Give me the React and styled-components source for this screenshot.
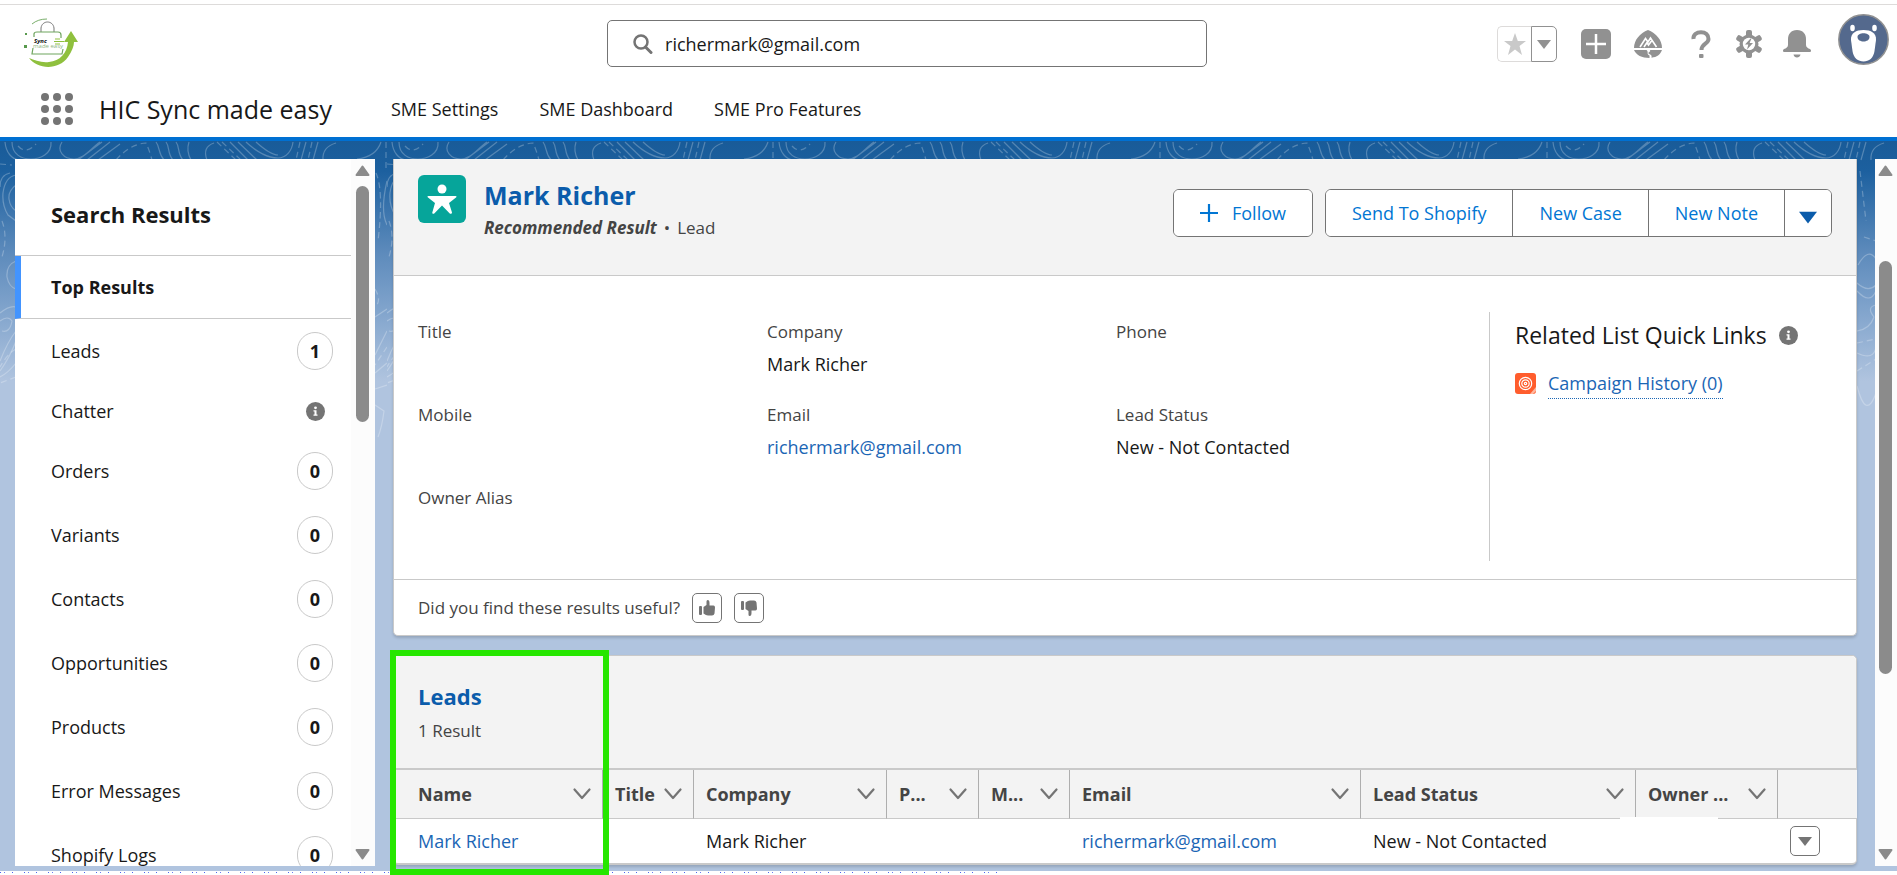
import React from 'react'
import styled, { createGlobalStyle } from 'styled-components';

const GlobalStyle = createGlobalStyle`
* {
  box-sizing: border-box;
}
body {
  margin: 0;
  background: #fff;
  color: #181818;
  font-family: "Open Sans", "Noto Sans", sans-serif;
  font-size: 18px;
  line-height: 26px;
}
button, input {
  font: inherit;
  color: inherit;
}
a {
  color: #1b66b5;
  text-decoration: none;
}
svg {
  display: block;
}
`;

const Page = styled.div`
display: flex;
flex-direction: column;
height: 100vh;
padding-top: 4px;
overflow: hidden;
`;

/* ---------- header ---------- */

const TopBar = styled.header`
display: grid;
grid-template-columns: 32% minmax(0, 600px) 1fr;
align-items: center;
height: 78px;
border-top: 1px solid #dddbda;
`;

const LogoLink = styled.a`
padding-left: 22px;
`;

const SearchBox = styled.label`
display: flex;
align-items: center;
gap: 12px;
height: 47px;
padding: 0 25px;
border: 1px solid #747474;
border-radius: 5px;
`;

const SearchInput = styled.input`
flex: 1;
min-width: 0;
padding: 0;
border: 0;
outline: 0;
background: none;
`;

const Actions = styled.div`
display: flex;
justify-content: flex-end;
align-items: center;
gap: 16px;
padding-right: 8px;
`;

const IconButton = styled.button`
display: flex;
justify-content: center;
width: ${props => props.$width || 32}px;
padding: 0;
border: 0;
background: none;
color: #919191;
`;

const Favorites = styled.div`
display: flex;
height: 36px;
margin-right: 8px;
`;

const FavoriteButton = styled.button`
display: flex;
align-items: center;
justify-content: center;
width: ${props => props.$menu ? 26 : 34}px;
padding: 0;
border: 1px solid ${props => props.$menu ? '#919191' : '#dddbda'};
border-right-width: ${props => props.$menu ? 1 : 0}px;
border-radius: ${props => props.$menu ? '0 5px 5px 0' : '5px 0 0 5px'};
background: #fff;
`;

const AvatarButton = styled.button`
margin: 0 0 8px 9px;
padding: 0;
border: 0;
background: none;
`;

const NavBar = styled.nav`
display: flex;
align-items: center;
height: 59px;
padding: 0 0 2px 41px;
border-bottom: 4px solid #0070d2;
`;

const AppName = styled.span`
margin: 0 59px 0 26px;
font-size: 25px;
line-height: 34px;
`;

const NavLinks = styled.div`
display: flex;
gap: 41px;
`;

const NavLink = styled.a`
color: #181818;
`;

/* ---------- page body ---------- */

const Content = styled.div`
position: relative;
display: flex;
flex: 1;
min-height: 0;
padding: 18px 0 5px 15px;
background: linear-gradient(#195b98 0, #1c609f 30px, #5c8abb 110px, #7ea2cb 165px, #b0c4df 240px);
`;

const Contours = styled.svg`
position: absolute;
top: 0;
left: 0;
width: 100%;
height: 300px;
`;

const Sidebar = styled.aside`
position: relative;
display: flex;
width: 360px;
margin-right: 18px;
background: #fff;
overflow: hidden;
`;

const SidebarList = styled.div`
flex: 1;
`;

const SidebarTitle = styled.h2`
margin: 0;
padding: 39px 36px 24px;
border-bottom: 1px solid #c9c9c9;
font-size: 22px;
line-height: 33px;
`;

const SidebarLink = styled.a`
display: flex;
align-items: center;
justify-content: space-between;
height: ${props => props.$short ? 56 : 64}px;
padding: 0 18px 0 36px;
color: #181818;
`;

const TopResults = styled(SidebarLink)`
height: 63px;
padding-left: 30px;
border-left: 6px solid #4294ff;
border-bottom: 1px solid #c9c9c9;
font-weight: 700;
`;

const Count = styled.span`
display: flex;
align-items: center;
justify-content: center;
width: 36px;
height: 38px;
border: 1px solid #c9c9c9;
border-radius: 18px;
font-weight: 700;
`;

const InfoHolder = styled.span`
display: flex;
justify-content: center;
width: 36px;
`;

const Rail = styled.div`
position: relative;
display: flex;
flex-direction: column;
align-items: center;
gap: 10px;
width: ${props => props.$width}px;
padding: 6px 2px 6px 0;
background: #fcfcfc;
`;

const Track = styled.div`
display: flex;
flex: 1;
flex-direction: column;
`;

const Space = styled.div`
flex: ${props => props.$grow};
`;

const Thumb = styled.div`
flex: ${props => props.$grow};
width: 13px;
border-radius: 7px;
background: #8b8b8b;
`;

const Main = styled.main`
position: relative;
display: flex;
flex: 1;
flex-direction: column;
gap: 19px;
min-width: 0;
margin-right: 18px;
`;

const Card = styled.section`
position: relative;
border: 1px solid #c9c9c9;
border-top-width: ${props => props.$cut ? 0 : 1}px;
border-bottom-width: ${props => props.$cut ? 1 : 2}px;
border-radius: ${props => props.$cut ? '0 0 5px 5px' : '5px'};
background: #fff;
box-shadow: 0 2px 3px rgba(0, 0, 0, 0.16);
`;

const RecordHeader = styled.div`
display: flex;
align-items: flex-start;
height: 117px;
padding: 16px 24px 0;
border-bottom: 1px solid #c9c9c9;
background: #f3f3f3;
`;

const RecordText = styled.div`
flex: 1;
padding: 3px 0 0 18px;
`;

const CardTitle = styled.h2`
margin: 0;
font-size: ${props => props.$large ? 25 : 22}px;
line-height: 34px;
a {
  color: #0b5cab;
}
`;

const Muted = styled.p`
margin: 0;
color: #444;
font-size: 17px;
line-height: 28px;
`;

const Subtitle = styled(Muted)`
display: flex;
gap: 7px;
line-height: 32px;
`;

const ButtonRow = styled.div`
display: flex;
gap: 12px;
padding-top: 14px;
`;

const ButtonGroup = styled.div`
display: flex;
border: 1px solid #747474;
border-radius: 6px;
background: #fff;
overflow: hidden;
`;

const ActionButton = styled.button`
display: flex;
align-items: center;
gap: 14px;
height: 46px;
padding: 0 26px;
border: 0;
background: #fff;
color: #0176d3;
& + & {
  border-left: 1px solid #747474;
}
`;

const MoreButton = styled(ActionButton)`
padding: 8px 14px 0;
color: #0b5cab;
`;

const RecordBody = styled.div`
display: flex;
gap: 24px;
padding: 36px 24px 18px;
`;

const Fields = styled.dl`
display: grid;
flex: 1;
grid-template-columns: repeat(3, 1fr);
margin: 0;
`;

const Field = styled.div`
height: 83px;
`;

const FieldLabel = styled.dt`
color: #444;
font-size: 17px;
line-height: 40px;
`;

const FieldValue = styled.dd`
margin: 0;
line-height: 24px;
`;

const QuickLinks = styled.div`
width: 343px;
padding: 6px 0 0 25px;
border-left: 1px solid #c9c9c9;
`;

const QuickTitle = styled.h3`
display: flex;
align-items: center;
gap: 12px;
margin: 0 0 17px;
font-size: 23px;
font-weight: 400;
line-height: 34px;
white-space: nowrap;
`;

const QuickRow = styled.div`
display: flex;
align-items: flex-start;
gap: 12px;
`;

const QuickLink = styled.a`
padding-bottom: 1px;
border-bottom: 1px dotted #1b66b5;
line-height: 28px;
`;

const CampaignIcon = styled.svg`
margin-top: 4px;
`;

const Feedback = styled.div`
display: flex;
align-items: center;
gap: 12px;
height: 56px;
padding: 0 24px;
border-top: 1px solid #c9c9c9;
`;

const SmallButton = styled.button`
display: flex;
align-items: center;
justify-content: center;
width: 30px;
height: 30px;
padding: 0;
border: 1px solid #747474;
border-radius: 5px;
background: #fff;
color: #747474;
`;

/* ---------- leads table ---------- */

const ListHeader = styled.div`
display: grid;
gap: 4px;
padding: 23px 24px;
border-bottom: 2px solid #c9c9c9;
border-radius: 5px 5px 0 0;
background: #f3f3f3;
`;

const Table = styled.table`
width: 100%;
border-collapse: separate;
border-spacing: 0;
table-layout: fixed;
`;

const HeadCell = styled.th`
height: 49px;
padding: 0 11px 0 12px;
border-right: 1px solid #aeaeae;
border-bottom: 1px solid #c9c9c9;
background: #f3f3f3;
color: #444;
font-weight: 700;
text-align: left;
white-space: nowrap;
&:first-child {
  padding-left: 24px;
}
&:last-child {
  border-right: 0;
}
`;

const HeadContent = styled.div`
display: flex;
align-items: center;
justify-content: space-between;
`;

const Cell = styled.td`
height: 44px;
padding: 0 12px;
white-space: nowrap;
&:first-child {
  padding-left: 24px;
}
`;

const OwnerCell = styled(Cell)`
position: relative;
&::before {
  content: '';
  position: absolute;
  top: -2px;
  left: -16px;
  width: 98px;
  height: 4px;
  background: #fff;
}
`;

const Highlight = styled.div`
position: absolute;
top: -6px;
left: -4px;
bottom: -12px;
width: 219px;
border: 6px solid #26e600;
z-index: 2;
pointer-events: none;
`;

const TornEdge = styled.footer`
width: 53%;
height: 4px;
flex: none;
background: repeating-linear-gradient(90deg, #4a63f0 0 1px, #fff 1px 4px, #6a7df2 4px 5px, #fff 5px 12px, #4a63f0 12px 13px, #fff 13px 24px) 0 1px / 100% 1px no-repeat;
`;

/* ---------- drawings ---------- */

const Logo = () => (
  <svg width="58" height="53" viewBox="0 0 58 53" role="img" aria-label="Sync made easy">
    <path d="M7 41C15 52 36 54 46 40C50 34 52 29 52 25H56L49 14L42 25H46C45 36 38 44 27 45C19 46 13 43 7 41Z" fill="#8fc03e" />
    <path d="M10 7Q16 2 25 2" fill="none" stroke="#79ae6b" strokeWidth="1" />
    <path d="M19 15V11C20 3 31 3 32 11V15" fill="none" stroke="#777" strokeWidth="1" />
    <path d="M12 20V17Q12 15 15 15H36Q39 15 39 18V21M11 31L10 37H40L41 32" fill="none" stroke="#6fa55f" strokeWidth="1.2" />
    <path d="M33 22H38M32 24.500H42M33 27H38" stroke="#8fc03e" strokeWidth="1" />
    <path d="M3 16H5V18H3ZM2 28H5V31H2Z" fill="#57994d" />
    <text x="12" y="26" fontSize="6" fontWeight="700" fontStyle="italic" fill="#111">Sync</text>
    <text x="11" y="31" fontSize="6" fill="#8fb583">made easy</text>
  </svg>
);

const Waffle = () => (
  <svg width="32" height="32" viewBox="0 0 32 32" fill="#747474">
    {[4, 16, 28].map(y => [4, 16, 28].map(x => <circle key={`${x}-${y}`} cx={x} cy={y} r="4" />))}
  </svg>
);

const Magnifier = () => (
  <svg width="20" height="20" viewBox="0 0 20 20" fill="none" stroke="#747474">
    <circle cx="8" cy="8" r="6.500" strokeWidth="2.500" />
    <path d="M12.500 13L18 18.500" strokeWidth="3" strokeLinecap="round" />
  </svg>
);

const Caret = ({ size = 14, fill = 'currentColor' }) => (
  <svg width={size} height={size} viewBox="0 0 14 14"><path d="M0 3H14L7 12Z" fill={fill} /></svg>
);

const Star = () => (
  <svg width="24" height="24" viewBox="0 0 24 24">
    <path d="M12 1L14.800 9H23L16.500 14L19 23L12 17.500L5 23L7.500 14L1 9H9.200Z" fill="#c9c9c9" />
  </svg>
);

const PlusSquare = () => (
  <svg width="30" height="30" viewBox="0 0 30 30">
    <rect width="30" height="30" rx="5" fill="currentColor" />
    <path d="M15 5V25M5 15H25" stroke="#fff" strokeWidth="2.500" />
  </svg>
);

const Trailhead = () => (
  <svg width="28" height="28" viewBox="0 0 28 28">
    <path d="M0 18C0 10 6 3 14 0C22 3 28 10 28 18Z" fill="currentColor" />
    <path d="M0 20H12.500C15 22 12 24 15.500 25.500V28C8 28 2 25 0 20ZM16 20H28C26 25 23 27 17.500 27.700C18 25 17 25 14.500 23.500C14 22 17 22 16 20Z" fill="currentColor" />
    <path d="M6 17L11.500 8.500L14 12L16.500 8L22.500 17M10 17L13 12.500L14.500 15L17.500 11" fill="none" stroke="#fff" strokeWidth="1.600" />
  </svg>
);

const Question = () => (
  <svg width="20" height="28" viewBox="0 0 20 28">
    <path d="M2.500 9C2 5 5.500 2.200 10 2.200S17.500 5 17.500 9C17.500 14 10.500 13.500 10.500 20" fill="none" stroke="currentColor" strokeWidth="4" />
    <rect x="8" y="24" width="4.500" height="4" rx="1" fill="currentColor" />
  </svg>
);

const Gear = () => (
  <svg width="28" height="28" viewBox="0 0 28 28">
    {[0, 60, 120].map(a => (
      <rect key={a} x="11" y="0" width="6" height="28" rx="2" fill="currentColor" transform={`rotate(${a} 14 14)`} />
    ))}
    <circle cx="14" cy="14" r="9.500" fill="currentColor" />
    <circle cx="14" cy="14" r="6.200" fill="#fff" />
    <path d="M15.500 8.500L10 14.500H13.300L12 19.500L18 13H14.600L16.500 8.500Z" fill="currentColor" />
  </svg>
);

const Bell = () => (
  <svg width="28" height="28" viewBox="0 0 28 28" fill="currentColor">
    <path d="M14 0C8 0 5 4 5 9V15C5 17 3 18.500 1 19C-.5 20-.2 22 1 22H27C28.200 22 28.500 20 27 19C25 18.500 23 17 23 15V9C23 4 20 0 14 0ZM10.500 24.500H17.500C17 28.500 11 28.500 10.500 24.500Z" />
  </svg>
);

const Avatar = () => (
  <svg width="51" height="51" viewBox="0 0 51 51">
    <circle cx="25.500" cy="25.500" r="24.700" fill="#54698d" stroke="#919191" strokeWidth="1.500" />
    <ellipse cx="14.500" cy="14" rx="2.300" ry="3.300" fill="#fff" />
    <ellipse cx="36.500" cy="14" rx="2.300" ry="3.300" fill="#fff" />
    <path d="M25.500 16C33 16 38.500 19 38 26L36.500 37C35.500 44 31 47.500 25.500 47.500S15.500 44 14.500 37L13 26C12.500 19 18 16 25.500 16Z" fill="#fff" />
    <path d="M19.500 23C19.500 18 31.500 18 31.500 23C31.500 29 19.500 29 19.500 23Z" fill="#54698d" />
  </svg>
);

const Info = () => (
  <svg width="19" height="19" viewBox="0 0 19 19">
    <circle cx="9.500" cy="9.500" r="9.500" fill="#747474" />
    <circle cx="9.500" cy="5.800" r="1.400" fill="#fff" />
    <path d="M7.500 8.300H10.500V12.500H11.500V13.800H7.500V12.500H8.500V9.500H7.500Z" fill="#fff" />
  </svg>
);

const LeadIcon = () => (
  <svg width="48" height="48" viewBox="0 0 48 48">
    <rect width="48" height="48" rx="6" fill="#06a59a" />
    <circle cx="24" cy="14" r="4.500" fill="#fff" />
    <path d="M10.500 21H37.500C38.800 21 38.800 22 38 22.600L31 28L34 37.500C34 39 32.300 39.200 31.500 38.300L24 30.500L16.500 38.300C15.700 39.200 14 39 14.300 37.500L17 28L10 22.600C9.200 22 9.200 21 10.500 21Z" fill="#fff" />
  </svg>
);

const Chevron = () => (
  <svg width="18" height="12" viewBox="0 0 18 12" fill="none" stroke="#747474" strokeWidth="2.200" strokeLinecap="round" strokeLinejoin="round">
    <path d="M1.500 1.500L9 10L16.500 1.500" />
  </svg>
);

const Plus = () => (
  <svg width="18" height="18" viewBox="0 0 18 18" stroke="currentColor" strokeWidth="2.200"><path d="M9 0V18M0 9H18" /></svg>
);

const Thumbs = ({ down }) => (
  <svg width="16" height="16" viewBox="0 0 16 16" fill="currentColor">
    <path transform={down ? 'matrix(1 0 0 -1 0 16)' : undefined} d="M0 7Q0 6 1 6H2Q3 6 3 7V14Q3 15 2 15H1Q0 15 0 14ZM4.500 7L7.500 5V1.500Q7.500 0 8.700 0Q10.500 0 10.500 3V5.500H14.500Q16 5.700 16 7.500L15.500 13.500Q15 15.500 13 15.500H9Q7 15.500 4.500 13.500Z" />
  </svg>
);

const Arrow = ({ down }) => (
  <svg width="15" height="11" viewBox="0 0 15 11">
    <path d={down ? 'M1.500 1H13.500L7.500 9.500Z' : 'M1.500 10H13.500L7.500 1.500Z'} fill="#8b8b8b" stroke="#8b8b8b" strokeWidth="2" strokeLinejoin="round" />
  </svg>
);

const ContourLines = () => (
  <Contours aria-hidden="true">
    <defs>
      <pattern id="contours" width="387" height="300" patternUnits="userSpaceOnUse">
        <g fill="none" stroke="#fff" strokeOpacity="0.25" strokeWidth="1.200">
          <path d="M12 1C12 14 22 18 31 18S52 13 51 1M5 1C6 12 12 18 19 19M62 1C56 10 64 18 74 18S90 8 100 1M78 19L102 1M87 19L110 1M98 19L120 3" />
          <path d="M156 1C160 6 158 12 164 19M166 1C170 6 167 12 173 19M176 1C180 6 177 12 183 19M189 1Q186 10 191 19M214 2Q202 6 207 19M230 1L248 19M238 1L257 19" />
          <path d="M246 1C260 14 270 17 278 17S292 10 293 1M256 1C266 10 272 14 278 14M306 1L301 19M318 1L313 19M336 2Q322 6 323 19M357 18Q376 16 381 1" />
          <path strokeDasharray="6 4" d="M18 5Q26 14 36 3M116 19Q130 3 146 2Q149 8 152 19M217 1L236 19M222 1L241 19M300 1L296 19M312 1L308 19M386 1V28M0 23L12 24M376 32Q384 50 378 100" />
          <path d="M16 34Q5 36 3 52Q2 64 8 74L16 80M16 44Q8 50 9 58Q10 66 16 70M10 32Q0 34 0 46M387 40Q380 70 387 84M16 120Q6 124 7 136Q9 146 16 148" />
          <path strokeDasharray="6 4" d="M2 80Q8 96 2 116M375 148Q382 160 375 166M16 208Q8 212 0 226M16 236L0 242M387 206L375 224" />
          <path d="M0 172Q10 164 16 166M0 180Q8 174 12 180Q10 192 2 190M16 190Q8 200 0 220M16 200Q10 216 0 230M16 222Q8 232 0 236M375 248L387 244M375 176L387 168M387 190L375 214M387 222L375 232M375 264L384 270Q382 286 378 296" />
          <path d="M309 142Q320 152 328 144M309 150Q322 164 328 150M328 164Q318 166 326 176M309 190Q322 188 326 176M309 212Q326 220 328 206M309 245Q318 280 328 252M310 124Q320 106 328 118" />
          <path strokeDasharray="6 4" d="M312 30L318 80M309 202L328 198M309 230L328 218M316 96L328 100" />
        </g>
      </pattern>
    </defs>
    <rect width="100%" height="300" fill="url(#contours)" />
  </Contours>
);

const Scrollbar = ({ width, before, thumb, after }) => (
  <Rail $width={width} aria-hidden="true">
    <Arrow />
    <Track>
      <Space $grow={before} />
      <Thumb $grow={thumb} />
      <Space $grow={after} />
    </Track>
    <Arrow down />
  </Rail>
);

const sidebarItems = [
  { name: 'Leads', count: 1 },
  { name: 'Chatter' },
  { name: 'Orders', count: 0 },
  { name: 'Variants', count: 0 },
  { name: 'Contacts', count: 0 },
  { name: 'Opportunities', count: 0 },
  { name: 'Products', count: 0 },
  { name: 'Error Messages', count: 0 },
  { name: 'Shopify Logs', count: 0 },
];

const fields = [
  { label: 'Title' },
  { label: 'Company', value: 'Mark Richer' },
  { label: 'Phone' },
  { label: 'Mobile' },
  { label: 'Email', value: <a href="mailto:richermark@gmail.com">richermark@gmail.com</a> },
  { label: 'Lead Status', value: 'New - Not Contacted' },
  { label: 'Owner Alias' },
];

const columns = [
  { label: 'Name', width: 209 },
  { label: 'Title', width: 91 },
  { label: 'Company', width: 193 },
  { label: 'P...', width: 92 },
  { label: 'M...', width: 91 },
  { label: 'Email', width: 291 },
  { label: 'Lead Status', width: 275 },
  { label: 'Owner ...', width: 142 },
  { label: '', width: 79 },
];

export default function App() {
    return (
      <Page>
        <GlobalStyle />
        <TopBar>
          <LogoLink href="#home"><Logo /></LogoLink>
          <SearchBox>
            <Magnifier />
            <SearchInput type="text" aria-label="Search" defaultValue="richermark@gmail.com" />
          </SearchBox>
          <Actions>
            <Favorites>
              <FavoriteButton aria-label="Favorite"><Star /></FavoriteButton>
              <FavoriteButton $menu aria-label="Favorites list"><Caret fill="#919191" /></FavoriteButton>
            </Favorites>
            <IconButton $width={30} aria-label="Global actions"><PlusSquare /></IconButton>
            <IconButton $width={42} aria-label="Guidance"><Trailhead /></IconButton>
            <IconButton aria-label="Help"><Question /></IconButton>
            <IconButton aria-label="Setup"><Gear /></IconButton>
            <IconButton aria-label="Notifications"><Bell /></IconButton>
            <AvatarButton aria-label="Profile"><Avatar /></AvatarButton>
          </Actions>
        </TopBar>
        <NavBar>
          <IconButton aria-label="App launcher"><Waffle /></IconButton>
          <AppName>HIC Sync made easy</AppName>
          <NavLinks>
            <NavLink href="#settings">SME Settings</NavLink>
            <NavLink href="#dashboard">SME Dashboard</NavLink>
            <NavLink href="#features">SME Pro Features</NavLink>
          </NavLinks>
        </NavBar>
        <Content>
          <ContourLines />
          <Sidebar>
            <SidebarList>
              <SidebarTitle>Search Results</SidebarTitle>
              <TopResults href="#top">Top Results</TopResults>
              {sidebarItems.map(item => (
                <SidebarLink key={item.name} href="#results" $short={item.count === undefined}>
                  {item.name}
                  {item.count === undefined ? <InfoHolder><Info /></InfoHolder> : <Count>{item.count}</Count>}
                </SidebarLink>
              ))}
            </SidebarList>
            <Scrollbar width={24} before={0} thumb={236} after={418} />
          </Sidebar>
          <Main>
            <Card $cut>
              <RecordHeader>
                <LeadIcon />
                <RecordText>
                  <CardTitle $large><a href="#lead">Mark Richer</a></CardTitle>
                  <Subtitle>
                    <strong><em>Recommended Result</em></strong>
                    <span>•</span>
                    <span>Lead</span>
                  </Subtitle>
                </RecordText>
                <ButtonRow>
                  <ButtonGroup>
                    <ActionButton><Plus />Follow</ActionButton>
                  </ButtonGroup>
                  <ButtonGroup>
                    <ActionButton>Send To Shopify</ActionButton>
                    <ActionButton>New Case</ActionButton>
                    <ActionButton>New Note</ActionButton>
                    <MoreButton aria-label="More actions"><Caret size={18} /></MoreButton>
                  </ButtonGroup>
                </ButtonRow>
              </RecordHeader>
              <RecordBody>
                <Fields>
                  {fields.map(field => (
                    <Field key={field.label}>
                      <FieldLabel>{field.label}</FieldLabel>
                      <FieldValue>{field.value}</FieldValue>
                    </Field>
                  ))}
                </Fields>
                <QuickLinks>
                  <QuickTitle>Related List Quick Links <Info /></QuickTitle>
                  <QuickRow>
                    <CampaignIcon width="21" height="21" viewBox="0 0 21 21">
                      <rect width="21" height="21" rx="3" fill="#ff5d2d" />
                      <g fill="none" stroke="#fff" strokeWidth="1.200">
                        <circle cx="10.500" cy="10.500" r="6.200" />
                        <circle cx="10.500" cy="10.500" r="3.700" />
                        <circle cx="10.500" cy="10.500" r="1.200" />
                      </g>
                      <path d="M15 21L21 14V18L18 21Z" fill="#ffb79f" />
                    </CampaignIcon>
                    <QuickLink href="#campaigns">Campaign History (0)</QuickLink>
                  </QuickRow>
                </QuickLinks>
              </RecordBody>
              <Feedback>
                <Muted>Did you find these results useful?</Muted>
                <SmallButton aria-label="Yes"><Thumbs /></SmallButton>
                <SmallButton aria-label="No"><Thumbs down /></SmallButton>
              </Feedback>
            </Card>
            <Card>
              <ListHeader>
                <CardTitle><a href="#leads">Leads</a></CardTitle>
                <Muted>1 Result</Muted>
              </ListHeader>
              <Table>
                <colgroup>
                  {columns.map(col => <col key={col.label} width={col.width} />)}
                </colgroup>
                <thead>
                  <tr>
                    {columns.map(col => (
                      <HeadCell key={col.label} scope="col">
                        {col.label && <HeadContent>{col.label}<Chevron /></HeadContent>}
                      </HeadCell>
                    ))}
                  </tr>
                </thead>
                <tbody>
                  <tr>
                    <Cell><a href="#lead">Mark Richer</a></Cell>
                    <Cell />
                    <Cell>Mark Richer</Cell>
                    <Cell />
                    <Cell />
                    <Cell><a href="mailto:richermark@gmail.com">richermark@gmail.com</a></Cell>
                    <Cell>New - Not Contacted</Cell>
                    <OwnerCell />
                    <Cell><SmallButton aria-label="Row actions"><Caret /></SmallButton></Cell>
                  </tr>
                </tbody>
              </Table>
              <Highlight />
            </Card>
          </Main>
          <Scrollbar width={22} before={75} thumb={414} after={165} />
        </Content>
        <TornEdge />
      </Page>
    )
}
